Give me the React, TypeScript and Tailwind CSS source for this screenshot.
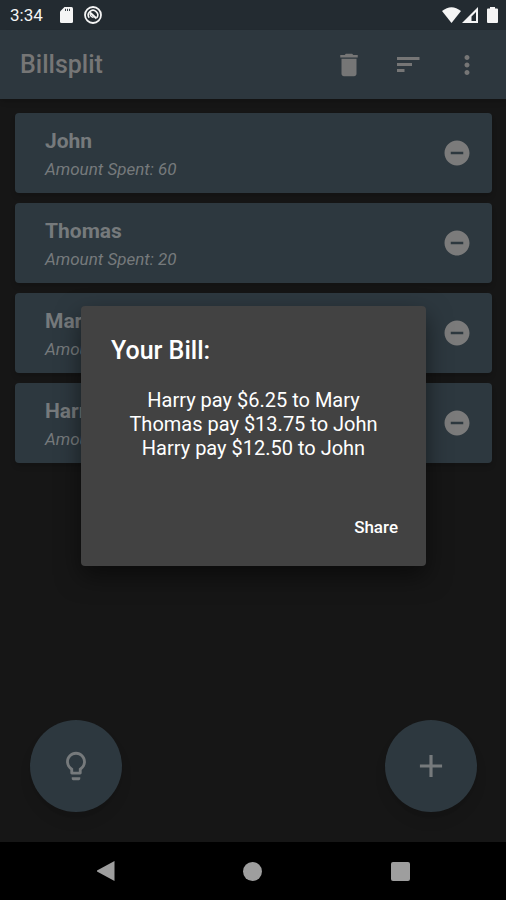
import React, { useState } from 'react';
import {
  MdAdd,
  MdDelete,
  MdLightbulbOutline,
  MdMoreVert,
  MdRemoveCircle
} from 'react-icons/md';

interface Person {
  name: string;
  spent: number;
}

const initialPeople: Person[] = [
  { name: 'John', spent: 60 },
  { name: 'Thomas', spent: 20 },
  { name: 'Mary', spent: 40 },
  { name: 'Harry', spent: 15 }
];

const payments = [
  'Harry pay $6.25 to Mary',
  'Thomas pay $13.75 to John',
  'Harry pay $12.50 to John'
];

const StatusBar: React.FC = () => (
  <div className="flex h-[30px] items-center justify-between bg-[#232b31] pl-[10px] pr-2 text-[#f5f5f5]">
    <div className="flex items-center">
      <span className="w-[50px] text-[17px] leading-[20px]">3:34</span>
      <svg className="h-4 w-[13px]" viewBox="0 0 13 16" fill="currentColor">
        <path d="M4.5 0H11.5Q13 0 13 1.5V14.5Q13 16 11.5 16H1.5Q0 16 0 14.5V4.5Z" />
        <path d="M5.5 1.8V4M7.5 1.8V4M9.500 1.8V4" stroke="#232b31" strokeWidth="0.9" />
      </svg>
      <svg className="ml-[11px] h-[18px] w-[18px]" viewBox="0 0 18 18" fill="none" stroke="currentColor">
        <circle cx="9" cy="9" r="8" strokeWidth="1.8" />
        <path d="M5.200 11.800A4.700 4.700 0 1 1 12.800 11.800" strokeWidth="1.6" />
        <path d="M6 6.500L12.500 12.500" strokeWidth="2" />
        <path d="M6 8Q6.500 11 9.500 11.500" strokeWidth="1.3" />
      </svg>
    </div>
    <div className="flex items-center">
      <svg className="h-4 w-[19px]" viewBox="0 0 19 16" fill="currentColor">
        <path d="M0 4Q9.500 -3.600 19 4L9.500 16Z" />
      </svg>
      <svg className="ml-px h-4 w-4" viewBox="0 0 16 16" fill="currentColor">
        <path fillRule="evenodd" d="M16 0V16H0ZM14 5L9.500 9.500V14H14Z" />
      </svg>
      <svg className="ml-[9px] h-4 w-[11px]" viewBox="0 0 11 16" fill="currentColor">
        <path d="M3 0H8V1.600H10Q11 1.600 11 2.600V15Q11 16 10 16H1Q0 16 0 15V2.600Q0 1.600 1 1.600H3Z" />
      </svg>
    </div>
  </div>
);

const SortIcon: React.FC = () => (
  <svg className="h-[30px] w-[30px]" viewBox="0 0 30 30" stroke="currentColor" strokeWidth="3">
    <path d="M4 8.500H26.500M4 14.500H19M4 20.500H11.500" />
  </svg>
);

const PersonCard: React.FC<{ person: Person; onRemove: () => void }> = ({ person, onRemove }) => (
  <li className="flex h-20 items-center justify-between rounded bg-[#2d383f] pl-[30px] pr-5 shadow-md">
    <div className="pt-1">
      <h2 className="text-[21px] font-bold leading-[28px]">{person.name}</h2>
      <p className="text-[17px] italic leading-[28px]">Amount Spent: {person.spent}</p>
    </div>
    <button type="button" aria-label={`Remove ${person.name}`} onClick={onRemove}>
      <MdRemoveCircle size={30} className="text-[#7b7b7b]" />
    </button>
  </li>
);

const App: React.FC = () => {
  const [people, setPeople] = useState<Person[]>(initialPeople);

  const removePerson = (name: string) => {
    setPeople(people.filter(person => person.name !== name));
  };

  return (
    <div className="relative flex min-h-screen flex-col bg-[#161616] font-[Roboto,sans-serif] text-[#767a7c]">
      <StatusBar />

      <header className="flex h-[69px] items-center justify-between bg-[#2d373e] pl-5 pr-[10px] shadow-md">
        <h1 className="text-[25px] font-medium leading-[30px] text-[#767676]">Billsplit</h1>
        <div className="flex text-[#767676]">
          <button type="button" aria-label="Delete all" className="flex w-[59px] justify-center">
            <MdDelete size={30} />
          </button>
          <button type="button" aria-label="Sort" className="flex w-[59px] justify-center">
            <SortIcon />
          </button>
          <button type="button" aria-label="More options" className="flex w-[59px] justify-center">
            <MdMoreVert size={30} />
          </button>
        </div>
      </header>

      <main className="flex flex-1 flex-col justify-between">
        <ul className="flex flex-col gap-[10px] px-[14px] pl-[15px] pt-[14px]">
          {people.map(person => (
            <PersonCard
              key={person.name}
              person={person}
              onRemove={() => removePerson(person.name)}
            />
          ))}
        </ul>

        <div className="flex justify-between pb-[30px] pl-[30px] pr-[29px]">
          <button
            type="button"
            aria-label="Split the bill"
            className="flex h-[92px] w-[92px] items-center justify-center rounded-full bg-[#2d383f] shadow-lg"
          >
            <MdLightbulbOutline size={34} />
          </button>
          <button
            type="button"
            aria-label="Add person"
            className="flex h-[92px] w-[92px] items-center justify-center rounded-full bg-[#2d383f] shadow-lg"
          >
            <MdAdd size={38} />
          </button>
        </div>
      </main>

      {/* System navigation */}
      <nav className="flex h-[58px] items-center bg-black px-8 text-[#9e9e9e]">
        <button type="button" aria-label="Back" className="flex flex-1 justify-center">
          <svg className="h-5 w-5" viewBox="0 0 20 20" fill="currentColor">
            <path d="M18.500 0V20L1 10.500V9.500Z" />
          </svg>
        </button>
        <button type="button" aria-label="Home" className="flex flex-1 justify-center">
          <span className="h-[19px] w-[19px] rounded-full bg-current" />
        </button>
        <button type="button" aria-label="Recent apps" className="flex flex-1 justify-center">
          <span className="h-[19px] w-[19px] rounded-xs bg-current" />
        </button>
      </nav>

      {/* Bill dialog, centered between the system bars */}
      <div className="absolute inset-0 flex items-center justify-center pb-[58px] pl-[81px] pr-20 pt-[30px]">
        <div
          role="dialog"
          aria-labelledby="bill-title"
          className="w-full max-w-md rounded bg-[#424242] pb-6 pt-[30px] text-white shadow-[0_10px_24px_rgba(0,0,0,0.5)]"
        >
          <h2 id="bill-title" className="px-[30px] text-[25px] font-medium leading-[30px]">
            Your Bill:
          </h2>
          <div className="mt-[22px] text-center text-[20px] leading-[24px]">
            {payments.map(payment => (
              <p key={payment}>{payment}</p>
            ))}
          </div>
          <div className="mt-[52px] flex justify-end px-7">
            <button type="button" className="text-[17px] font-medium leading-[30px]">
              Share
            </button>
          </div>
        </div>
      </div>
    </div>
  );
};

export default App;
